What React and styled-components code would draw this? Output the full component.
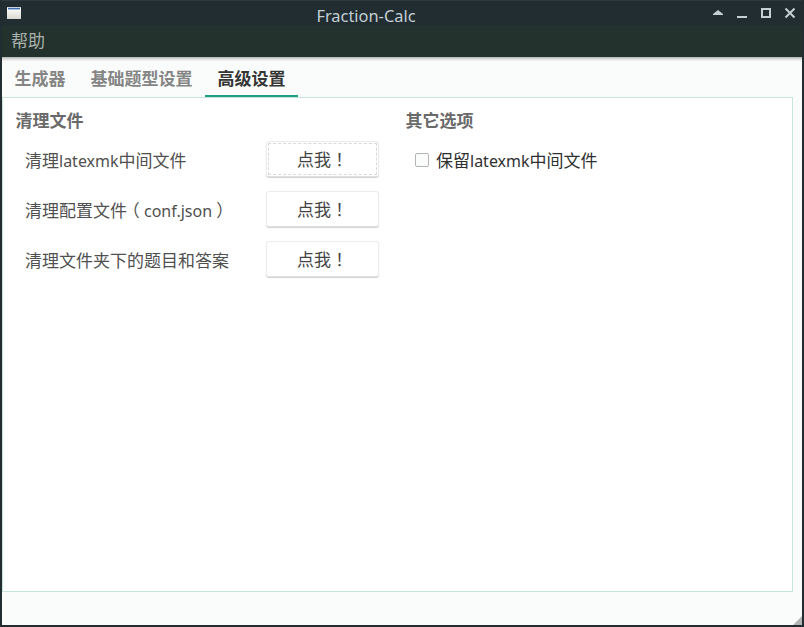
import React from "react";
import styled, { createGlobalStyle } from "styled-components";

const GlobalStyle = createGlobalStyle`
  * { box-sizing: border-box; }
  body { margin: 0; background: #222d32; }
`;

const Window = styled.div`
  width: 804px;
  height: 627px;
  display: flex;
  flex-direction: column;
  padding: 0 2px 2px;
  background: #222d32;
  overflow: hidden;
  font: 17px/24px "Noto Sans CJK SC", sans-serif;
  color: #505050;
  white-space: nowrap;
`;

const TitleBar = styled.header`
  height: 25px;
  flex: none;
  display: grid;
  grid-template-columns: 24px 1fr 96px;
  border-top: 1px solid #2c393f;
  background: #222d32;
`;

const AppIcon = styled.svg`
  margin: 6px 0 0 5px;
`;

const Title = styled.h1`
  margin: 3px 0 0;
  text-align: center;
  font: 400 16.4px/24px "Noto Sans", sans-serif;
  color: #c3cfd2;
`;

const MenuBar = styled.nav`
  height: 32px;
  flex: none;
  padding: 3px 9px;
  background: #23322c;
  color: #a9b0ad;
`;

const Client = styled.main`
  position: relative;
  flex: 1;
  display: flex;
  flex-direction: column;
  background: linear-gradient(#b0b2b1, #dcdedd 2px, #f4f6f5 4px, #fafcfb 5px);
`;

const Tabs = styled.div`
  height: 40px;
  display: flex;
`;

const Tab = styled.div`
  width: ${(p) => p.$width}px;
  height: 40px;
  padding-top: 9px;
  text-align: center;
  font-weight: 700;
  color: ${(p) => (p.$active ? "#353535" : "#858585")};
  border-bottom: ${(p) => (p.$active ? "2px solid #1ba085" : "0")};
`;

const Pane = styled.section`
  width: 791px;
  height: 495px;
  border: 1px solid #c5e5dd;
  background: #fff;
  display: grid;
  grid-template-columns: 390px 1fr;
  padding: 10px 0 0 12.5px;
`;

const GroupTitle = styled.h2`
  margin: 0;
  font-size: 17px;
  line-height: 24px;
  font-weight: 700;
  color: #6a6a6a;
`;

const Row = styled.div`
  height: 50px;
  display: grid;
  grid-template-columns: 241px 113px;
  padding-left: 9.5px;
`;

const Label = styled.span`
  height: 40px;
  padding-top: 16px;
`;

const Latin = styled.span`
  font: 16px/20px "Noto Sans", sans-serif;
`;

const Wide = styled.span`
  font-family: "Noto Sans CJK TC", sans-serif;
`;

const Bracket = styled.span`
  padding: 0 4.25px;
  font-feature-settings: "halt" 1;
`;

const Button = styled.button`
  width: 113px;
  height: 36px;
  margin: 9px 0 0;
  padding: 0 0 1px;
  border: 1px solid #ececec;
  border-bottom-color: #e0e0e0;
  border-radius: 3px;
  background: #fff;
  box-shadow: 0 1px 1px #d2d2d2;
  font: inherit;
  color: #444;
  outline: ${(p) => (p.$focused ? "1px dashed #d9d9d9" : "none")};
  outline-offset: -3px;
`;

const Option = styled.label`
  display: flex;
  align-items: center;
  margin-top: 16px;
  padding-left: 9.5px;
  gap: 7px;
  color: #303030;
`;

const Checkbox = styled.input`
  appearance: none;
  width: 14px;
  height: 14px;
  margin: 0;
  border: 1px solid #b4b4b4;
  border-radius: 2px;
  background: #fafcfb;
`;

const SizeGrip = styled.svg`
  position: absolute;
  right: 0;
  bottom: 0;
`;

export default function App() {
  const labels = [
    <>清理<Latin>latexmk</Latin>中间文件</>,
    <>清理配置文件<Bracket>（</Bracket><Latin>conf.json</Latin><Bracket>）</Bracket></>,
    <>清理文件夹下的题目和答案</>,
  ];
  return (
    <>
      <GlobalStyle />
      <Window>
        <TitleBar>
          <AppIcon width="14" height="12" shapeRendering="crispEdges">
            <defs>
              <linearGradient id="page" x2="0" y2="1">
                <stop stopColor="#fff" />
                <stop offset="1" stopColor="#d9d9d3" />
              </linearGradient>
            </defs>
            <rect width="14" height="12" fill="url(#page)" />
            <rect width="14" height="1" fill="#c8d4e4" />
            <rect x="1" y="1" width="12" height="1" fill="#3c6eb0" />
            <rect x="1" y="2" width="12" height="1" fill="#a9c0e0" />
          </AppIcon>
          <Title>Fraction-Calc</Title>
          <svg width="96" height="24" fill="#c3cfd2">
            <path d="M7 14v-1l5-4 5 4v1z" />
            <path d="M31 15h10v2H31z" />
            <path d="M55 7h10v10H55zM57 9v6h6V9z" fillRule="evenodd" />
            <path d="M79.500 7.500l9 9M88.500 7.500l-9 9" stroke="#c3cfd2" strokeWidth="2" />
          </svg>
        </TitleBar>
        <MenuBar>帮助</MenuBar>
        <Client>
          <Tabs role="tablist">
            <Tab $width={76} role="tab">生成器</Tab>
            <Tab $width={127} role="tab">基础题型设置</Tab>
            <Tab $width={93} $active role="tab">高级设置</Tab>
          </Tabs>
          <Pane>
            <div>
              <GroupTitle>清理文件</GroupTitle>
              {labels.map((label, i) => (
                <Row key={i}>
                  <Label>{label}</Label>
                  <Button $focused={i === 0}>
                    点我<Wide>！</Wide>
                  </Button>
                </Row>
              ))}
            </div>
            <div>
              <GroupTitle>其它选项</GroupTitle>
              <Option>
                <Checkbox type="checkbox" />
                <span>保留<Latin>latexmk</Latin>中间文件</span>
              </Option>
            </div>
          </Pane>
          <SizeGrip width="9" height="9">
            <path d="M9 0v9H0z" fill="#b3b5b4" />
          </SizeGrip>
        </Client>
      </Window>
    </>
  );
}
